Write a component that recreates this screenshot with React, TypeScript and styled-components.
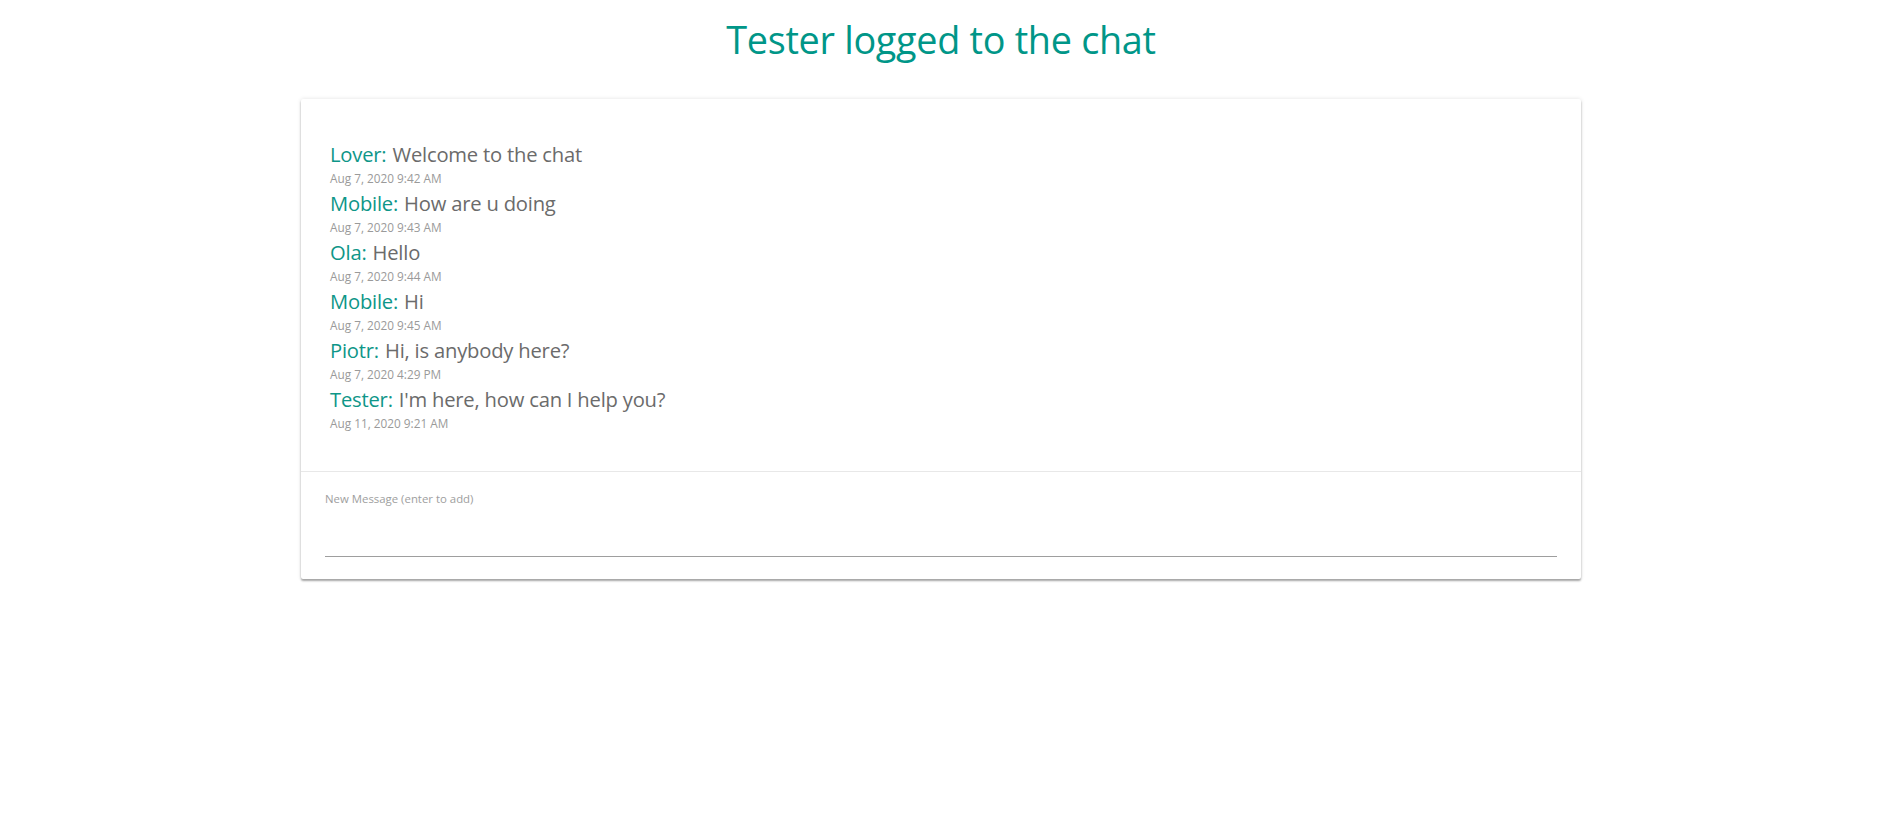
import React from "react";
import styled, { createGlobalStyle } from "styled-components";

const Global = createGlobalStyle`
  html, body { margin: 0; padding: 0; background: #fff; }
  body { font-family: "Open Sans", "Noto Sans", sans-serif; }
`;

const Page = styled.div`
  display: flex;
  flex-direction: column;
  align-items: center;
  padding-left: 5px;
  padding-bottom: 40px;
`;

const Title = styled.h1`
  margin: 14px 0 0;
  height: 85px;
  font-size: 37.8px;
  font-weight: 400;
  color: #009688;
  letter-spacing: -0.3px;
`;

const Card = styled.div`
  width: 1280px;
  background: #fff;
  border-radius: 2px;
  box-shadow: 0 2px 2px rgba(0, 0, 0, 0.32), 0 0 4px rgba(0, 0, 0, 0.12);
`;

const MessageList = styled.div`
  padding: 40px 29px 38px;
  border-bottom: 1px solid #e8e8e8;
`;

const Message = styled.div`
  display: flex;
  flex-direction: column;
`;

const Line = styled.div`
  font-size: 20.2px;
  line-height: 30px;
  color: #6b6b6b;
  letter-spacing: -0.2px;
`;

const Author = styled.span`
  color: #0e9688;
  margin-right: 6px;
`;

const Time = styled.div`
  font-size: 11.8px;
  line-height: 19px;
  color: #9a9a9a;
`;

const InputArea = styled.div`
  padding: 20px 24px 22px;
`;

const Label = styled.label`
  display: block;
  font-size: 11.4px;
  color: #9e9e9e;
  line-height: 14px;
`;

const Input = styled.input`
  display: block;
  width: 100%;
  box-sizing: border-box;
  border: none;
  border-bottom: 1px solid #9e9e9e;
  outline: none;
  height: 51px;
  font-family: inherit;
  font-size: 16px;
  padding: 0;
  background: transparent;
`;

const messages = [
  { author: "Lover", text: "Welcome to the chat", time: "Aug 7, 2020 9:42 AM" },
  { author: "Mobile", text: "How are u doing", time: "Aug 7, 2020 9:43 AM" },
  { author: "Ola", text: "Hello", time: "Aug 7, 2020 9:44 AM" },
  { author: "Mobile", text: "Hi", time: "Aug 7, 2020 9:45 AM" },
  { author: "Piotr", text: "Hi, is anybody here?", time: "Aug 7, 2020 4:29 PM" },
  { author: "Tester", text: "I'm here, how can I help you?", time: "Aug 11, 2020 9:21 AM" },
];

export default function App() {
  return (
    <>
      <Global />
      <Page>
        <Title>Tester logged to the chat</Title>
        <Card>
          <MessageList>
            {messages.map((m, i) => (
              <Message key={i}>
                <Line>
                  <Author>{m.author}:</Author>
                  {m.text}
                </Line>
                <Time>{m.time}</Time>
              </Message>
            ))}
          </MessageList>
          <InputArea>
            <Label htmlFor="msg">New Message (enter to add)</Label>
            <Input id="msg" />
          </InputArea>
        </Card>
      </Page>
    </>
  );
}
